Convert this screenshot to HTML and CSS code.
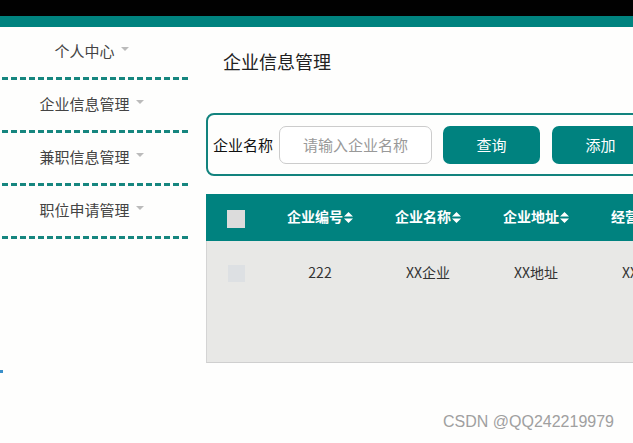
FILE: index.html
```html
<!DOCTYPE html>
<html lang="zh-CN">
<head>
  <meta charset="UTF-8">
  <title>企业信息管理</title>
  <link rel="stylesheet" href="styles.css">
</head>
<body>

<div class="topbar"></div>
<div class="teal-bar"></div>

<div class="layout">
  <div class="sidebar">
    <div class="menu-item">个人中心<span class="caret"></span></div>
    <div class="menu-item">企业信息管理<span class="caret"></span></div>
    <div class="menu-item">兼职信息管理<span class="caret"></span></div>
    <div class="menu-item">职位申请管理<span class="caret"></span></div>
    <div class="side-mark"></div>
  </div>

  <div class="main">
    <h2 class="page-title">企业信息管理</h2>

    <div class="search-box">
      <label>企业名称</label>
      <input type="text" placeholder="请输入企业名称" />
      <button class="btn">查询</button>
      <button class="btn">添加</button>
    </div>

    <div class="table-wrap">
      <table class="data-table">
        <colgroup>
          <col style="width: 60px">
          <col style="width: 108px">
          <col style="width: 108px">
          <col style="width: 108px">
          <col style="width: 108px">
        </colgroup>
        <thead>
          <tr>
            <th><span class="check head-check"></span></th>
            <th>企业编号<svg class="sort" width="9" height="11" viewBox="0 0 9 11"><path d="M4.5 0L9 4.5H0Z M4.5 11L0 6.5H9Z" fill="#fff"/></svg></th>
            <th>企业名称<svg class="sort" width="9" height="11" viewBox="0 0 9 11"><path d="M4.5 0L9 4.5H0Z M4.5 11L0 6.5H9Z" fill="#fff"/></svg></th>
            <th>企业地址<svg class="sort" width="9" height="11" viewBox="0 0 9 11"><path d="M4.5 0L9 4.5H0Z M4.5 11L0 6.5H9Z" fill="#fff"/></svg></th>
            <th>经营范围<svg class="sort" width="9" height="11" viewBox="0 0 9 11"><path d="M4.5 0L9 4.5H0Z M4.5 11L0 6.5H9Z" fill="#fff"/></svg></th>
          </tr>
        </thead>
        <tbody>
          <tr>
            <td><span class="check"></span></td>
            <td>222</td>
            <td>XX企业</td>
            <td>XX地址</td>
            <td>XX范围</td>
          </tr>
        </tbody>
      </table>
    </div>
  </div>
</div>

<div class="watermark">CSDN @QQ242219979</div>

</body>
</html>
```

FILE: styles.css
```css
body {
  margin: 0;
  font-family: "Noto Sans CJK SC", "Noto Sans", sans-serif;
  background: #fefefd;
  color: #333;
  width: 633px;
  height: 443px;
  overflow: hidden;
  position: relative;
}
.topbar {
  height: 16px;
  background: #010101;
}
.teal-bar {
  height: 11px;
  background: #00837f;
}
.layout {
  display: flex;
}
.sidebar {
  width: 190px;
  flex-shrink: 0;
  position: relative;
}
.menu-item {
  height: 46px;
  padding-bottom: 4px;
  display: flex;
  align-items: center;
  justify-content: center;
  padding-right: 7px;
  font-size: 15px;
  color: #444;
  position: relative;
  margin-bottom: 3px;
}
.menu-item::after {
  content: "";
  position: absolute;
  left: 2px;
  right: 0;
  bottom: -3px;
  height: 3px;
  background: repeating-linear-gradient(to right, #16867f 0 6px, transparent 6px 9px);
}
.caret {
  margin-left: 6px;
  width: 0;
  height: 0;
  border-left: 4px solid transparent;
  border-right: 4px solid transparent;
  border-top: 4px solid #bbb;
  margin-top: -2px;
}
.side-mark {
  position: absolute;
  left: 0;
  top: 343px;
  width: 3px;
  height: 3px;
  background: #3a8fc9;
}
.main {
  flex: 1;
  padding-left: 16px;
  overflow: hidden;
}
.page-title {
  margin: 22px 0 0 17px;
  font-size: 18px;
  font-weight: normal;
  line-height: 24px;
  color: #222;
}
.search-box {
  margin-top: 40px;
  width: 500px;
  height: 59px;
  border: 2px solid #12837e;
  border-radius: 8px;
  display: flex;
  align-items: center;
  padding-left: 5px;
}
.search-box label {
  font-size: 15px;
  color: #111;
  margin-right: 6px;
}
.search-box input {
  width: 151px;
  height: 36px;
  box-sizing: content-box;
  padding: 0;
  border: 1px solid #ccc;
  border-radius: 7px;
  text-align: center;
  font-family: inherit;
  font-size: 15px;
  outline: none;
}
.search-box input::placeholder {
  color: #999;
}
.btn {
  width: 97px;
  height: 38px;
  margin-left: 11px;
  border: none;
  border-radius: 7px;
  background: #00827f;
  color: #fff;
  font-family: inherit;
  font-size: 15px;
  cursor: pointer;
}
.btn + .btn {
  margin-left: 12px;
}
.table-wrap {
  margin-top: 18px;
  width: 500px;
  height: 169px;
  background: #e8e8e6;
  border-left: 1px solid #d4d4d4;
  border-bottom: 1px solid #cfcfcf;
  box-sizing: border-box;
}
.data-table {
  border-collapse: collapse;
  table-layout: fixed;
  width: 492px;
  margin-left: -1px;
}
.data-table th {
  height: 44px;
  padding: 0 0 3px;
  background: #00827f;
  color: #fff;
  font-size: 14px;
  font-weight: bold;
  white-space: nowrap;
}
.data-table th:first-child {
  padding: 0;
  height: 47px;
}
.data-table td {
  height: 62px;
  padding: 0;
  text-align: center;
  font-size: 14px;
  color: #333;
}
.sort {
  margin-left: 1px;
  vertical-align: -1px;
}
.check {
  display: inline-block;
  width: 17px;
  height: 17px;
  background: #dde0e3;
  vertical-align: middle;
}
.head-check {
  width: 18px;
  height: 18px;
  background: #dcdcdc;
}
.watermark {
  position: absolute;
  left: 443px;
  top: 413px;
  font-family: "Liberation Sans", sans-serif;
  font-size: 16px;
  color: #a0a0a0;
  letter-spacing: 0;
}
```
